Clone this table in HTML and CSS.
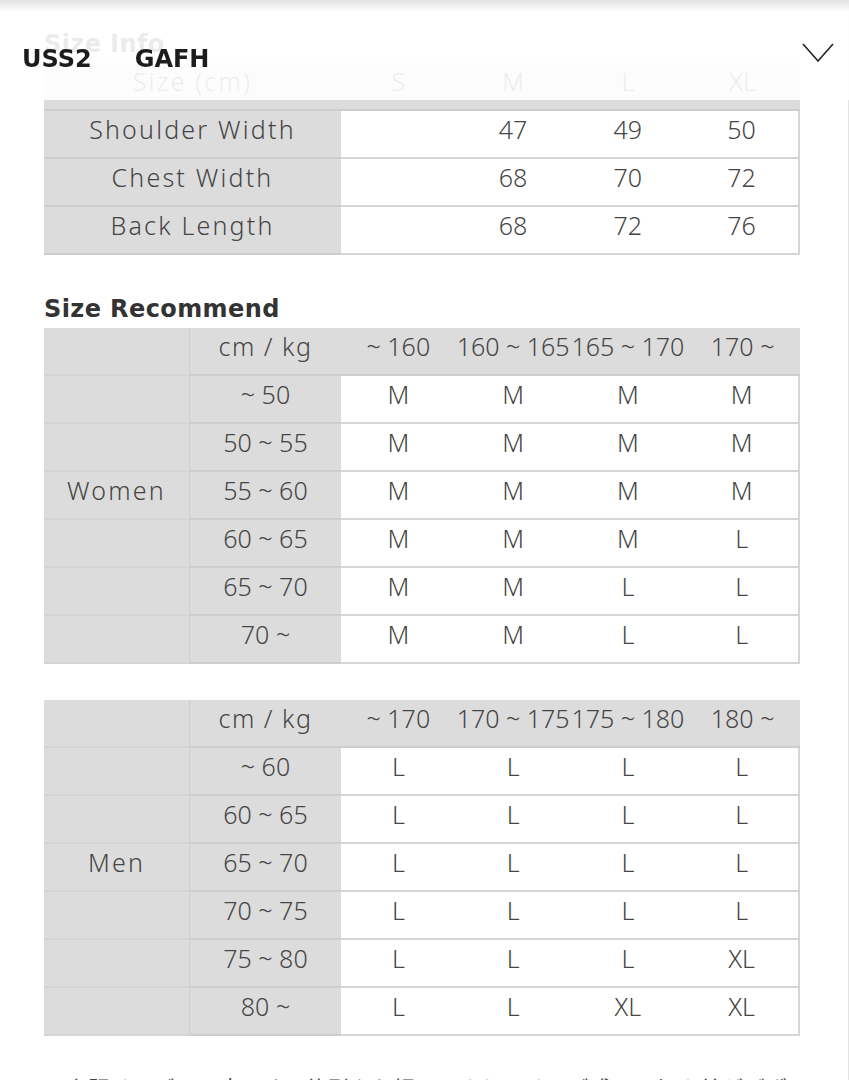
FILE: index.html
```html
<!DOCTYPE html>
<html lang="ja">
<head>
<meta charset="utf-8">
<title>Size Info</title>
<link rel="stylesheet" href="styles.css">
</head>
<body>
<header class="topbar">
  <div class="codes"><span>USS2</span><span>GAFH</span></div>
  <svg class="chev" viewBox="0 0 32 22" width="32" height="22" aria-hidden="true"><polyline points="1,2 16,19 31,2"/></svg>
</header>
<main class="sheet">
  <h2 class="title">Size Info</h2>
  <div class="grid info">
    <div class="cell hd lbl">Size (cm)</div><div class="cell hd">S</div><div class="cell hd">M</div><div class="cell hd">L</div><div class="cell hd">XL</div>
    <div class="cell key lbl">Shoulder Width</div><div class="cell val"></div><div class="cell val">47</div><div class="cell val">49</div><div class="cell val">50</div>
    <div class="cell key lbl">Chest Width</div><div class="cell val"></div><div class="cell val">68</div><div class="cell val">70</div><div class="cell val">72</div>
    <div class="cell key lbl">Back Length</div><div class="cell val"></div><div class="cell val">68</div><div class="cell val">72</div><div class="cell val">76</div>
  </div>

  <h2 class="title rec-title">Size Recommend</h2>
  <div class="grid rec">
    <div class="cell grp"></div><div class="cell sub lbl">cm / kg</div><div class="cell hd">~ 160</div><div class="cell hd">160 ~ 165</div><div class="cell hd">165 ~ 170</div><div class="cell hd">170 ~</div>
    <div class="cell grp"></div><div class="cell sub">~ 50</div><div class="cell val">M</div><div class="cell val">M</div><div class="cell val">M</div><div class="cell val">M</div>
    <div class="cell grp"></div><div class="cell sub">50 ~ 55</div><div class="cell val">M</div><div class="cell val">M</div><div class="cell val">M</div><div class="cell val">M</div>
    <div class="cell grp lbl">Women</div><div class="cell sub">55 ~ 60</div><div class="cell val">M</div><div class="cell val">M</div><div class="cell val">M</div><div class="cell val">M</div>
    <div class="cell grp"></div><div class="cell sub">60 ~ 65</div><div class="cell val">M</div><div class="cell val">M</div><div class="cell val">M</div><div class="cell val">L</div>
    <div class="cell grp"></div><div class="cell sub">65 ~ 70</div><div class="cell val">M</div><div class="cell val">M</div><div class="cell val">L</div><div class="cell val">L</div>
    <div class="cell grp"></div><div class="cell sub">70 ~</div><div class="cell val">M</div><div class="cell val">M</div><div class="cell val">L</div><div class="cell val">L</div>
  </div>

  <div class="grid rec men">
    <div class="cell grp"></div><div class="cell sub lbl">cm / kg</div><div class="cell hd">~ 170</div><div class="cell hd">170 ~ 175</div><div class="cell hd">175 ~ 180</div><div class="cell hd">180 ~</div>
    <div class="cell grp"></div><div class="cell sub">~ 60</div><div class="cell val">L</div><div class="cell val">L</div><div class="cell val">L</div><div class="cell val">L</div>
    <div class="cell grp"></div><div class="cell sub">60 ~ 65</div><div class="cell val">L</div><div class="cell val">L</div><div class="cell val">L</div><div class="cell val">L</div>
    <div class="cell grp lbl">Men</div><div class="cell sub">65 ~ 70</div><div class="cell val">L</div><div class="cell val">L</div><div class="cell val">L</div><div class="cell val">L</div>
    <div class="cell grp"></div><div class="cell sub">70 ~ 75</div><div class="cell val">L</div><div class="cell val">L</div><div class="cell val">L</div><div class="cell val">L</div>
    <div class="cell grp"></div><div class="cell sub">75 ~ 80</div><div class="cell val">L</div><div class="cell val">L</div><div class="cell val">L</div><div class="cell val">XL</div>
    <div class="cell grp"></div><div class="cell sub">80 ~</div><div class="cell val">L</div><div class="cell val">L</div><div class="cell val">XL</div><div class="cell val">XL</div>
  </div>

  <p class="note">※上記サイズは目安です。体型やお好みにより、サイズ感には個人差がございます。</p>
</main>
</body>
</html>
```
FILE: styles.css
```css
html, body {
  margin: 0;
  background: #fff;
}
body {
  font-family: "Noto Sans", "Noto Sans CJK JP", sans-serif;
  color: #454545;
  overflow: hidden;
}

/* translucent sticky header laid over the scrolled content */
.topbar {
  position: fixed;
  top: 0;
  left: 0;
  right: 0;
  height: 100px;
  z-index: 5;
  display: flex;
  justify-content: space-between;
  align-items: flex-start;
  padding: 0 15px 0 22px;
  background: linear-gradient(to bottom, rgba(226,226,226,0.95) 0px, rgba(255,255,255,0.9) 12px, rgba(255,255,255,0.9) 100%);
}
.codes {
  margin-top: 45px;
  display: flex;
  gap: 43px;
  font: 700 24px/28px "DejaVu Sans", sans-serif;
  color: #1c1c1c;
}
.chev {
  margin-top: 42px;
  fill: none;
  stroke: #2e2e2e;
  stroke-width: 1.8;
}

.sheet {
  box-sizing: border-box;
  width: 849px;
  min-height: 100vh;
  padding: 30px 48px 0 44px;
  border-right: 1px solid #e3e3e3;
}

.title {
  margin: 0 0 5px;
  font: 700 24px/28px "DejaVu Sans", sans-serif;
  letter-spacing: 0.4px;
  color: #333;
}
.rec-title {
  margin-top: 40px;
}

.grid {
  display: grid;
}
.info {
  grid-template-columns: 297px repeat(4, 1fr);
}
.rec {
  grid-template-columns: 145px 152px repeat(4, 1fr);
}
.men {
  margin-top: 36px;
}

.cell {
  box-sizing: border-box;
  height: 48px;
  padding-bottom: 9px;
  border-bottom: 2px solid #cdcdcd;
  display: flex;
  align-items: center;
  justify-content: center;
  font-size: 25px;
  font-weight: 300;
  line-height: 1;
  white-space: nowrap;
  color: #454545;
}
.lbl {
  letter-spacing: 2.2px;
}
.sub.lbl {
  letter-spacing: 1.5px;
}
.hd, .key, .sub, .grp {
  background: #dcdcdc;
}
.grp {
  border-bottom-color: #d5d5d5;
}
.sub {
  border-left: 1px solid #cfcfcf;
}
.val {
  background: #fff;
  border-bottom-color: #d5d5d5;
}
.info .val:nth-child(5n),
.rec .val:nth-child(6n) {
  border-right: 2px solid #d5d5d5;
}

.note {
  margin: 34px 0 0;
  font: 22px/1.6 "Noto Sans CJK JP", sans-serif;
  color: #444;
}
```
